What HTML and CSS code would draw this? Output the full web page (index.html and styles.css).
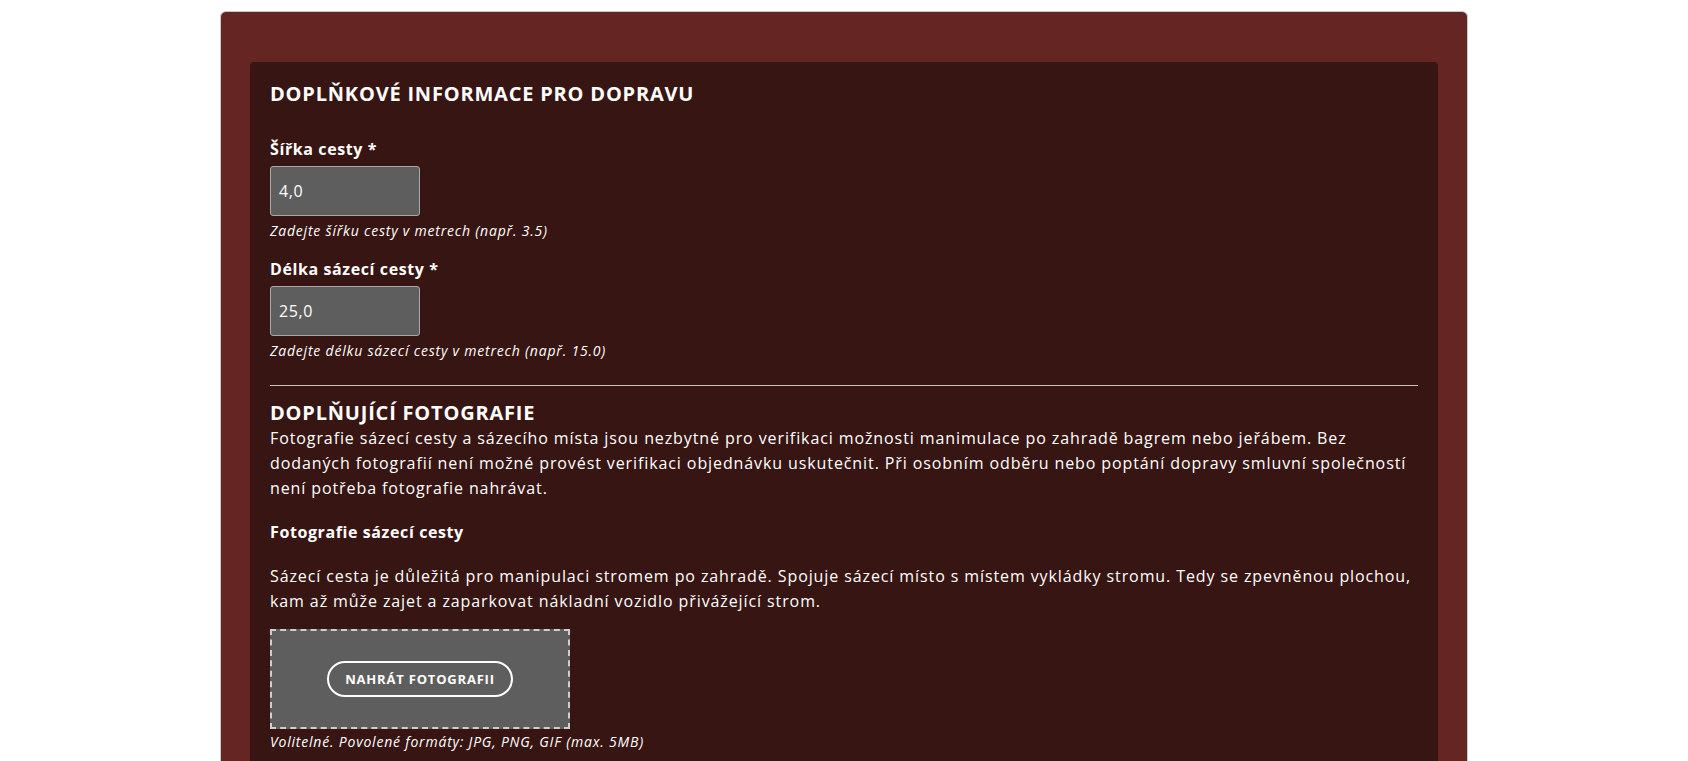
FILE: index.html
```html
<!DOCTYPE html>
<html lang="cs">
<head>
  <meta charset="UTF-8">
  <meta name="viewport" content="width=device-width, initial-scale=1.0">
  <title>Doplňkové informace pro dopravu</title>
  <link rel="stylesheet" href="styles.css">
</head>
<body>

  <!-- Outer card -->
  <div class="card">

    <!-- Transport details panel -->
    <div class="panel">
      <h1 class="panel-title">Doplňkové informace pro dopravu</h1>

      <div class="field">
        <label class="field-label" for="roadWidth">Šířka cesty *</label>
        <input type="text" id="roadWidth" class="field-input" value="4,0" />
        <small class="field-help">Zadejte šířku cesty v metrech (např. 3.5)</small>
      </div>

      <div class="field">
        <label class="field-label" for="roadLength">Délka sázecí cesty *</label>
        <input type="text" id="roadLength" class="field-input" value="25,0" />
        <small class="field-help">Zadejte délku sázecí cesty v metrech (např. 15.0)</small>
      </div>

      <hr class="divider" />

      <!-- Photos -->
      <h2 class="section-title">Doplňující fotografie</h2>
      <p class="section-text">Fotografie sázecí cesty a sázecího místa jsou nezbytné pro verifikaci možnosti manimulace po zahradě bagrem nebo jeřábem. Bez dodaných fotografií není možné provést verifikaci objednávku uskutečnit. Při osobním odběru nebo poptání dopravy smluvní společností není potřeba fotografie nahrávat.</p>

      <h3 class="photo-title">Fotografie sázecí cesty</h3>
      <p class="section-text">Sázecí cesta je důležitá pro manipulaci stromem po zahradě. Spojuje sázecí místo s místem vykládky stromu. Tedy se zpevněnou plochou, kam až může zajet a zaparkovat nákladní vozidlo přivážející strom.</p>

      <div class="upload-box">
        <button class="upload-button">Nahrát fotografii</button>
      </div>
      <small class="field-help">Volitelné. Povolené formáty: JPG, PNG, GIF (max. 5MB)</small>
    </div>

  </div>

</body>
</html>
```

FILE: styles.css
```css
/* General page style */
body {
  font-family: 'Open Sans', 'DejaVu Sans', sans-serif;
  letter-spacing: 0.6px;
  margin: 0;
  padding: 0;
  background-color: #ffffff;
  color: #ffffff;
}

/* Outer card */
.card {
  max-width: 1188px;
  margin: 11px auto 0;
  padding: 50px 29px 30px;
  background-color: #652623;
  border: 1px solid #c9c9c9;
  border-radius: 6px;
}

/* Dark inner panel */
.panel {
  background-color: #371512;
  border-radius: 4px;
  padding: 20px;
}

.panel-title {
  font-size: 20px;
  line-height: 24px;
  font-weight: 700;
  letter-spacing: 0.8px;
  text-transform: uppercase;
  margin: 0 0 33px;
}

/* Form fields */
.field {
  display: flex;
  flex-direction: column;
  align-items: flex-start;
  margin-bottom: 20px;
}

.field-label {
  font-size: 16px;
  line-height: 20px;
  font-weight: 700;
  margin-bottom: 7px;
}

.field-input {
  box-sizing: border-box;
  width: 150px;
  height: 50px;
  padding: 0 8px;
  font-family: inherit;
  font-size: 16px;
  letter-spacing: inherit;
  color: #ffffff;
  background-color: #5e5e5e;
  border: 1px solid #a8a8a8;
  border-radius: 3px;
}

.field-help {
  display: block;
  margin-top: 6px;
  font-size: 14px;
  line-height: 17px;
  font-style: italic;
  font-weight: 500;
  letter-spacing: 0.8px;
}

.divider {
  border: none;
  border-top: 1px solid #c9c2c0;
  margin: 26px 0 14px;
}

/* Photo section */
.section-title {
  font-size: 20px;
  line-height: 26px;
  font-weight: 700;
  letter-spacing: 0.8px;
  text-transform: uppercase;
  margin: 0;
}

.section-text {
  font-size: 16px;
  line-height: 25px;
  letter-spacing: 0.9px;
  margin: 0;
}

.photo-title {
  font-size: 16px;
  line-height: 20px;
  font-weight: 700;
  margin: 21px 0 22px;
}

.upload-box {
  box-sizing: border-box;
  width: 300px;
  height: 100px;
  margin-top: 15px;
  display: flex;
  justify-content: center;
  align-items: center;
  background-color: #5e5e5e;
  border: 2px dashed #cfcfcf;
}

.upload-box + .field-help {
  margin-top: 4px;
}

.upload-button {
  height: 36px;
  padding: 0 16px;
  font-family: inherit;
  font-size: 13px;
  font-weight: 700;
  letter-spacing: 0.8px;
  text-transform: uppercase;
  color: #ffffff;
  background: transparent;
  border: 2px solid #ffffff;
  border-radius: 18px;
  cursor: pointer;
}
```
